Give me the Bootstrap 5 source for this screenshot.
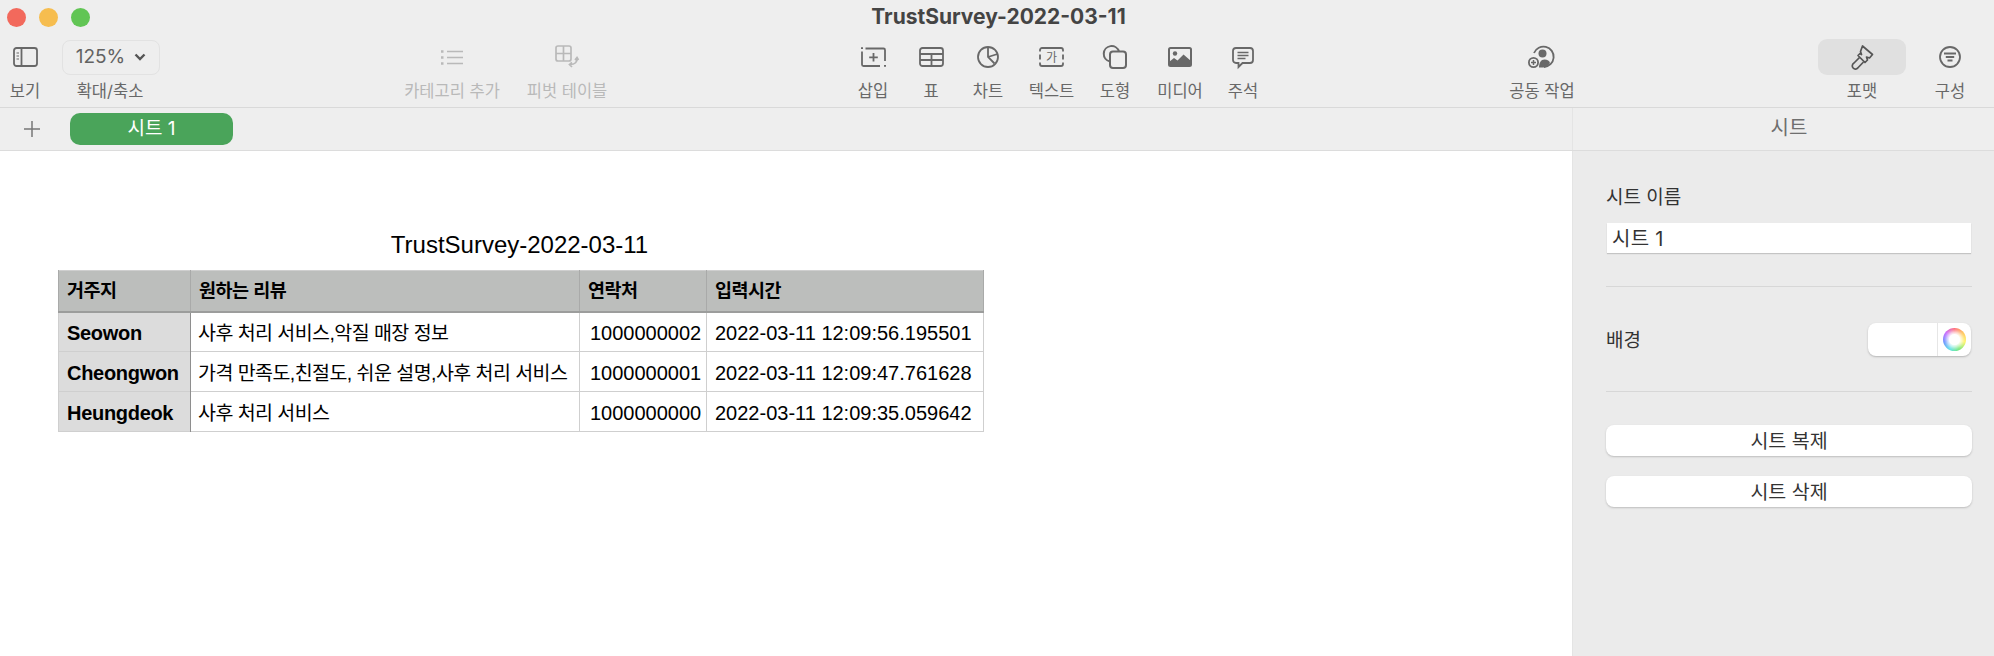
<!DOCTYPE html>
<html lang="ko">
<head>
    <meta charset="UTF-8">
    <meta name="viewport" content="width=device-width, initial-scale=1.0">
    <title>TrustSurvey-2022-03-11</title>
    <link href="https://cdn.jsdelivr.net/npm/bootstrap@5.3.0/dist/css/bootstrap.min.css" rel="stylesheet">
    <style>
        html, body { height: 656px; overflow: hidden; }
        body { font-family: "Liberation Sans", "Noto Sans CJK KR", sans-serif; background: #fff; color: #000; }
        .ui-font { font-family: Inter, "Noto Sans CJK KR", sans-serif; }

        .chrome { background: #eeeeee; }
        .title-row { height: 34px; display: grid; grid-template-columns: 1fr auto 1fr; align-items: center; padding: 0 8px 0 7px; }
        .light { width: 19px; height: 19px; border-radius: 50%; }
        .light-red { background: #f2695c; }
        .light-yellow { background: #f6bd4f; }
        .light-green { background: #61c554; }
        .lights { gap: 13px; }
        .doc-title { font-size: 21px; font-weight: 700; color: #444; margin-left: 4px; }

        .tool-row { height: 74px; border-bottom: 1px solid #d9d9d9; }
        .tool { display: flex; flex-direction: column; align-items: center; color: #686868; }
        .tool.off { color: #b9b9b9; }
        .tool-top { height: 36px; margin-top: 5px; display: flex; align-items: center; justify-content: center; width: 100%; }
        .tool-label { font-size: 16.5px; line-height: 20px; margin-top: 6px; white-space: nowrap; }
        .tool-top svg { display: block; overflow: visible; }
        .zoom-box { width: 98px; height: 35px; margin-left: 2px; border: 1px solid #e2e2e2; border-radius: 8px; color: #626262; font-size: 19px; gap: 9px; }
        .on .tool-top { background: #e0e0e0; border-radius: 9px; }

        .g-left { display: grid; grid-template-columns: 50px 10px 100px; }
        .g-cat { display: grid; grid-template-columns: 100px 15px 100px; margin-left: 242px; }
        .g-ins { display: grid; grid-template-columns: 58px 58px 56px 71px 56px 74px 52px; margin-left: 227px; }
        .g-col { width: 100px; margin-left: 223px; }
        .g-right { display: grid; grid-template-columns: 88px 88px; margin-left: 226px; }

        .tab-row { height: 43px; border-bottom: 1px solid #dcdcdc; }
        .tab-left { width: 1572px; padding-left: 24px; gap: 30px; }
        .sheet-tab { width: 163px; height: 32px; background: #4aa45a; color: #fff; border-radius: 10px; font-size: 19px; text-align: center; line-height: 32px; }
        .side-head { flex: 1; border-left: 1px solid #e4e4e4; padding-left: 11px; text-align: center; font-size: 20px; color: #6f6f6f; line-height: 41px; }

        .workspace { height: 505px; }
        .canvas-area { width: 1572px; padding: 80px 0 0 58px; }
        .sheet-name { width: 925px; font-size: 24px; line-height: 28px; margin-bottom: 11px; padding-right: 2px; }
        .data-table.table { width: 925px; table-layout: fixed; font-size: 20px; margin: 0; border-color: #cfcfcf; }
        .data-table.table th, .data-table.table td { padding: 2px 0 0 8px; vertical-align: middle; height: 40px; line-height: 24px; white-space: nowrap; color: #000; border-color: #cfcfcf; }
        .data-table.table td.kr { letter-spacing: -0.55px; font-size: 19.5px; padding-left: 7px; }
        .data-table.table td.num { padding-left: 10px; }
        .data-table.table td.stamp { padding-left: 8px; }
        .data-table.table thead th { background: #bcbebc; border-color: #a9aaa9; border-bottom: 2px solid #9c9d9c; height: 41px; padding-top: 0; font-size: 18.5px; letter-spacing: -0.5px; }
        .data-table.table tbody th { background: #dcdcdc; border-right: 1px solid #8e8e8e; letter-spacing: -0.3px; }

        .side-panel { flex: 1; background: #ebebeb; border-left: 1px solid #e4e4e4; padding: 35px 22px 0 33px; color: #333; font-size: 19px; }
        .side-label { line-height: 24px; }
        .name-field { width: 364px; height: 30px; margin: 13px 0 0 1px; background: #fff; border-radius: 0; box-shadow: 0 1px 1px #c4c4c4; padding: 0 5px; font-size: 20px; letter-spacing: 0.3px; color: #333; line-height: 33px; }
        .side-rule { margin: 0; border: 0; height: 1px; background: #d7d7d7; opacity: 1; }
        .rule-first { margin-top: 33px; }
        .well-row { padding: 35px 0; height: 104px; }
        .well-text { margin-top: 4px; }
        .well { width: 103px; height: 33px; background: #fff; border-radius: 8px; box-shadow: 0 1px 2px #b5b5b5; margin-right: 1px; }
        .well-left { width: 70px; height: 33px; border-right: 1px solid #e6e6e6; }
        .well-right { width: 33px; }
        .wheel { width: 23px; height: 23px; border-radius: 50%; background: conic-gradient(#ff5f6d, #ffc04d, #fff45c, #6fe66f, #55e0e6, #5a86ff, #c45cff, #ff5f6d); position: relative; }
        .wheel::after { content: ""; position: absolute; inset: 6px; border-radius: 50%; background: #fff; box-shadow: 0 0 4px 3px #fff; }
        .btn-stack { margin-top: 33px; gap: 20px; }
        .side-btn { width: 366px; height: 31px; padding: 0; background: #fff; border: 0; border-radius: 8px; box-shadow: 0 1px 2px #bdbdbd; color: #333; font-size: 19.5px; line-height: 28px; display: block; }
        .side-btn:hover { background: #fff; }
    </style>
</head>
<body>
    <div class="chrome ui-font">
        <div class="title-row">
            <div class="d-flex lights">
                <span class="light light-red"></span>
                <span class="light light-yellow"></span>
                <span class="light light-green"></span>
            </div>
            <div class="doc-title">TrustSurvey-2022-03-11</div>
            <div></div>
        </div>

        <div class="tool-row d-flex">
            <div class="g-left">
                <div class="tool">
                    <div class="tool-top">
                        <svg width="25" height="20" viewBox="0 0 25 20" fill="none" stroke="currentColor" stroke-width="1.8"><rect x="1" y="1" width="23" height="18" rx="2.5"/><path d="M8.5 1v18"/><path d="M3.5 6h2.5M3.5 9h2.5M3.5 12h2.5" stroke-width="1.2"/></svg>
                    </div>
                    <div class="tool-label">보기</div>
                </div>
                <div></div>
                <div class="tool">
                    <div class="tool-top">
                        <div class="zoom-box d-flex align-items-center justify-content-center">125%
                            <svg width="12" height="8" viewBox="0 0 12 8" fill="none" stroke="#555" stroke-width="2.4"><path d="M1.5 1.5 6 6l4.5-4.5"/></svg>
                        </div>
                    </div>
                    <div class="tool-label">확대/축소</div>
                </div>
            </div>

            <div class="g-cat">
                <div class="tool off">
                    <div class="tool-top">
                        <svg width="22" height="15" viewBox="0 0 22 15" fill="none" stroke="currentColor" stroke-width="1.6"><path d="M6 1.500h16M6 7.500h16M6 13.500h16"/><path d="M0 1.500h2.500M0 7.500h2.500M0 13.500h2.500" stroke-width="2.400"/></svg>
                    </div>
                    <div class="tool-label">카테고리 추가</div>
                </div>
                <div></div>
                <div class="tool off">
                    <div class="tool-top">
                        <svg width="24" height="24" viewBox="0 0 24 24" fill="none" stroke="currentColor" stroke-width="1.700"><rect x="1" y="1" width="15" height="15" rx="2"/><path d="M8.500 1v15M1 8.500h15"/><path d="M22 13c.5 4-2 6.500-7 6.500M20 15l2-2.500 1.500 2.500M17 17.500 14.500 19.500 17 22"/></svg>
                    </div>
                    <div class="tool-label">피벗 테이블</div>
                </div>
            </div>

            <div class="g-ins">
                <div class="tool">
                    <div class="tool-top">
                        <svg width="25" height="20" viewBox="0 0 25 20" fill="none" stroke="currentColor" stroke-width="1.800"><path d="M1 4.500V17.500A1.500 1.500 0 0 0 2.500 19H19"/><path d="M4.500 1.500H22.500A1.500 1.500 0 0 1 24 3V14"/><path d="M0 1.200h2M23 18.800h2"/><path d="M12.500 6v8.500M8.200 10.300h8.600"/></svg>
                    </div>
                    <div class="tool-label">삽입</div>
                </div>
                <div class="tool">
                    <div class="tool-top">
                        <svg width="25" height="20" viewBox="0 0 25 20" fill="none" stroke="currentColor" stroke-width="1.800"><rect x="1" y="1" width="23" height="18" rx="2.500"/><path d="M1 7h23M1 13h23M12.500 7v12"/></svg>
                    </div>
                    <div class="tool-label">표</div>
                </div>
                <div class="tool">
                    <div class="tool-top">
                        <svg width="22" height="22" viewBox="0 0 22 22" fill="none" stroke="currentColor" stroke-width="1.800"><circle cx="11" cy="11" r="10"/><path d="M11 1v10l6.500 6.500M11 11l9.500-3"/></svg>
                    </div>
                    <div class="tool-label">차트</div>
                </div>
                <div class="tool">
                    <div class="tool-top">
                        <svg width="25" height="20" viewBox="0 0 25 20" fill="none" stroke="currentColor" stroke-width="1.800"><path d="M1 4.500V3A2 2 0 0 1 3 1h19a2 2 0 0 1 2 2v1.500M1 15.500V17a2 2 0 0 0 2 2h19a2 2 0 0 0 2-2v-1.500M1 7.500v5M24 7.500v5"/><text x="12.500" y="14.500" text-anchor="middle" font-size="12" fill="currentColor" stroke="none" font-family="Noto Sans CJK KR">가</text></svg>
                    </div>
                    <div class="tool-label">텍스트</div>
                </div>
                <div class="tool">
                    <div class="tool-top">
                        <svg width="24" height="24" viewBox="0 0 24 24" fill="none" stroke="currentColor" stroke-width="2"><path d="M7 16.500A7.800 7.800 0 1 1 16 6.500"/><rect x="7" y="6.500" width="16" height="16.500" rx="3"/></svg>
                    </div>
                    <div class="tool-label">도형</div>
                </div>
                <div class="tool">
                    <div class="tool-top">
                        <svg width="24" height="20" viewBox="0 0 24 20"><rect x="1" y="1" width="22" height="18" rx="1.500" fill="none" stroke="currentColor" stroke-width="2"/><path fill="currentColor" d="M1 15l5-4 3.500 2.500L15.500 7.500 23 14v4a1 1 0 0 1-1 1H2a1 1 0 0 1-1-1Z"/><circle cx="7" cy="6.500" r="2.200" fill="currentColor"/></svg>
                    </div>
                    <div class="tool-label">미디어</div>
                </div>
                <div class="tool">
                    <div class="tool-top">
                        <svg width="22" height="21" viewBox="0 0 22 21" fill="none" stroke="currentColor" stroke-width="1.800"><path d="M4 1h14a3 3 0 0 1 3 3v9a3 3 0 0 1-3 3h-7.500l-4 4v-4H4a3 3 0 0 1-3-3V4a3 3 0 0 1 3-3Z"/><path d="M5.500 5.500h11M5.500 8.500h11M5.500 11.500h8" stroke-width="1.400"/></svg>
                    </div>
                    <div class="tool-label">주석</div>
                </div>
            </div>

            <div class="g-col">
                <div class="tool">
                    <div class="tool-top">
                        <svg width="28" height="22" viewBox="0 0 28 22" fill="none" stroke="currentColor" stroke-width="1.800"><path d="M6 7A10.200 10.200 0 1 1 16 21"/><circle cx="14.500" cy="7.500" r="4" fill="currentColor" stroke="none"/><path d="M11 21.500c0-5 2-8 5.500-8 3 0 5 1.500 5.500 3.500-1.500 2.500-4 4.500-7 4.500Z" fill="currentColor" stroke="none"/><circle cx="5.500" cy="16.500" r="4.600" fill="#eee"/><path d="M3 16.500h5M5.500 14v5" stroke-width="1.500"/></svg>
                    </div>
                    <div class="tool-label">공동 작업</div>
                </div>
            </div>

            <div class="g-right">
                <div class="tool on">
                    <div class="tool-top">
                        <svg width="24" height="25" viewBox="0 0 24 25" fill="none" stroke="#555" stroke-width="1.700" stroke-linejoin="round"><path d="M12.500 1 22.500 9.500 19.500 13 16.500 12 17.500 15 15 17.500 8 10.500 10 8.500 11.500 9.500 10.500 6.500Z"/><path d="M9.500 12.500 4 18a3.200 3.200 0 1 0 4.200 4.500L13.500 17"/></svg>
                    </div>
                    <div class="tool-label">포맷</div>
                </div>
                <div class="tool">
                    <div class="tool-top">
                        <svg width="22" height="22" viewBox="0 0 22 22" fill="none" stroke="currentColor" stroke-width="1.800"><circle cx="11" cy="11" r="10"/><path d="M5 7.500h12M6.800 11h8.400M8.500 14.500h5"/></svg>
                    </div>
                    <div class="tool-label">구성</div>
                </div>
            </div>
        </div>

        <div class="tab-row d-flex">
            <div class="tab-left d-flex align-items-center">
                <svg width="16" height="16" viewBox="0 0 16 16" stroke="#777" stroke-width="1.500"><path d="M8 0v16M0 8h16"/></svg>
                <div class="sheet-tab">시트 1</div>
            </div>
            <div class="side-head">시트</div>
        </div>
    </div>

    <div class="workspace d-flex">
        <div class="canvas-area">
            <div class="sheet-name text-center">TrustSurvey-2022-03-11</div>
            <table class="table table-bordered data-table">
                <colgroup>
                    <col style="width: 132px">
                    <col style="width: 389px">
                    <col style="width: 127px">
                    <col style="width: 277px">
                </colgroup>
                <thead>
                    <tr><th>거주지</th><th>원하는 리뷰</th><th>연락처</th><th>입력시간</th></tr>
                </thead>
                <tbody>
                    <tr><th>Seowon</th><td class="kr">사후 처리 서비스,악질 매장 정보</td><td class="num">1000000002</td><td class="stamp">2022-03-11 12:09:56.195501</td></tr>
                    <tr><th>Cheongwon</th><td class="kr">가격 만족도,친절도, 쉬운 설명,사후 처리 서비스</td><td class="num">1000000001</td><td class="stamp">2022-03-11 12:09:47.761628</td></tr>
                    <tr><th>Heungdeok</th><td class="kr">사후 처리 서비스</td><td class="num">1000000000</td><td class="stamp">2022-03-11 12:09:35.059642</td></tr>
                </tbody>
            </table>
        </div>

        <aside class="side-panel ui-font">
            <div class="side-label">시트 이름</div>
            <div class="name-field">시트 1</div>
            <hr class="side-rule rule-first">
            <div class="d-flex align-items-center justify-content-between well-row">
                <span class="well-text">배경</span>
                <div class="well d-flex align-items-center">
                    <div class="well-left"></div>
                    <div class="well-right d-flex justify-content-center"><span class="wheel"></span></div>
                </div>
            </div>
            <hr class="side-rule">
            <div class="d-flex flex-column btn-stack">
                <button type="button" class="btn side-btn">시트 복제</button>
                <button type="button" class="btn side-btn">시트 삭제</button>
            </div>
        </aside>
    </div>
</body>
</html>
